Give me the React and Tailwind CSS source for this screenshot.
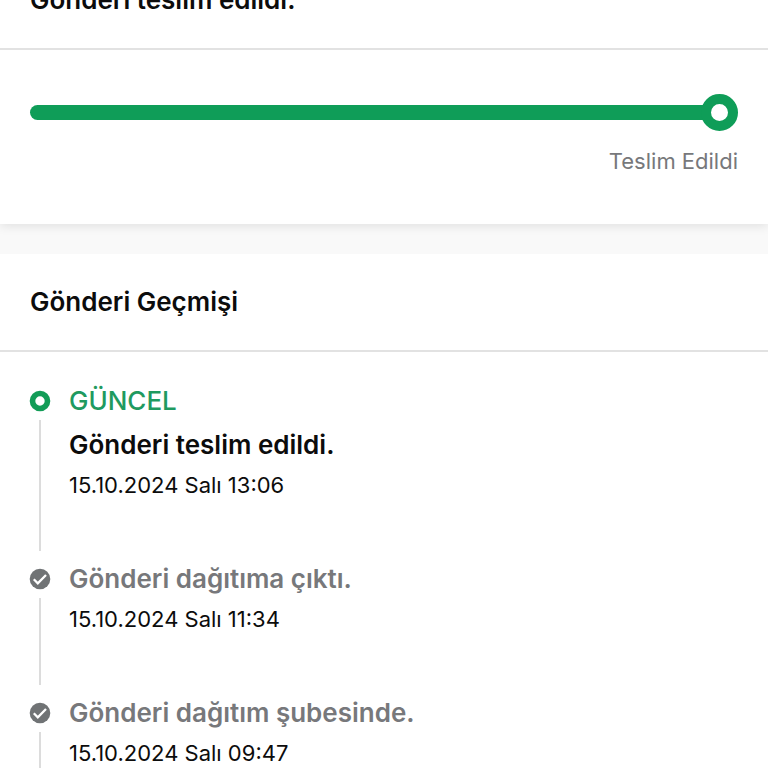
const events = [
  { id: 1, title: 'Gönderi teslim edildi.', date: '15.10.2024 Salı 13:06', current: true },
  { id: 2, title: 'Gönderi dağıtıma çıktı.', date: '15.10.2024 Salı 11:34' },
  { id: 3, title: 'Gönderi dağıtım şubesinde.', date: '15.10.2024 Salı 09:47' },
]

function CurrentIcon() {
  return (
    <svg viewBox="0 0 20 20" className="w-5 h-5 overflow-visible" aria-hidden="true">
      <circle cx="10" cy="10" r="7.5" fill="#fff" stroke="#129c57" strokeWidth="5.6" />
    </svg>
  )
}

function DoneIcon() {
  return (
    <svg viewBox="0 0 20 20" className="w-5 h-5 overflow-visible" aria-hidden="true">
      <circle cx="10" cy="10" r="10.3" fill="#707375" />
      <path d="M3.8 10.3l4 4 8.2-8.3" fill="none" stroke="#fff" strokeWidth="2.3" />
    </svg>
  )
}

function SectionTitle({ children }) {
  return (
    <div className="px-[30px] py-8 border-b-2 border-[#e2e2e2]">
      <h2 className="text-[26px] leading-8 font-semibold">{children}</h2>
    </div>
  )
}

function Progress({ label }) {
  return (
    <div className="px-[30px] pt-11 pb-[49px]">
      <div
        role="progressbar"
        aria-label={label}
        aria-valuenow={100}
        className="flex items-center"
      >
        <div className="flex-1 h-[15px] -mr-1 rounded-l-full bg-[#0f9d58]" />
        <div className="w-[37px] h-[37px] rounded-full border-[10px] border-[#0f9d58] bg-white" />
      </div>
      <p className="mt-4 text-right text-[22px] leading-7 text-[#77787b]">{label}</p>
    </div>
  )
}

function Event({ title, date, current }) {
  return (
    <li className="flex gap-[19px]">
      <div className="flex flex-col items-center">
        <div className="h-8 flex items-center">
          {current ? <CurrentIcon /> : <DoneIcon />}
        </div>
        <div className="flex-1 w-[2px] mt-[3px] mb-3 bg-[#dcdcdc]" />
      </div>
      <div className="pb-16">
        {current && (
          <p className="mb-3 text-[26px] leading-8 font-medium text-[#1f9a60]">GÜNCEL</p>
        )}
        <h3 className={`text-[26px] leading-8 font-semibold ${current ? '' : 'text-[#77787b]'}`}>
          {title}
        </h3>
        <p className="mt-[10px] text-[22px] leading-7">{date}</p>
      </div>
    </li>
  )
}

export default function App() {
  return (
    <main className="h-screen overflow-hidden bg-[#f9f9f9] font-['Inter',sans-serif] text-[#0c0c0c]">
      <section className="-mt-12 bg-white shadow-[0_2px_10px_rgba(0,0,0,0.1)]">
        <SectionTitle>Gönderi teslim edildi.</SectionTitle>
        <Progress label="Teslim Edildi" />
      </section>

      <section className="mt-[30px] bg-white relative">
        <SectionTitle>Gönderi Geçmişi</SectionTitle>
        <ul className="px-[30px] pt-[33px]">
          {events.map(event => (
            <Event key={event.id} {...event} />
          ))}
        </ul>
      </section>
    </main>
  )
}
